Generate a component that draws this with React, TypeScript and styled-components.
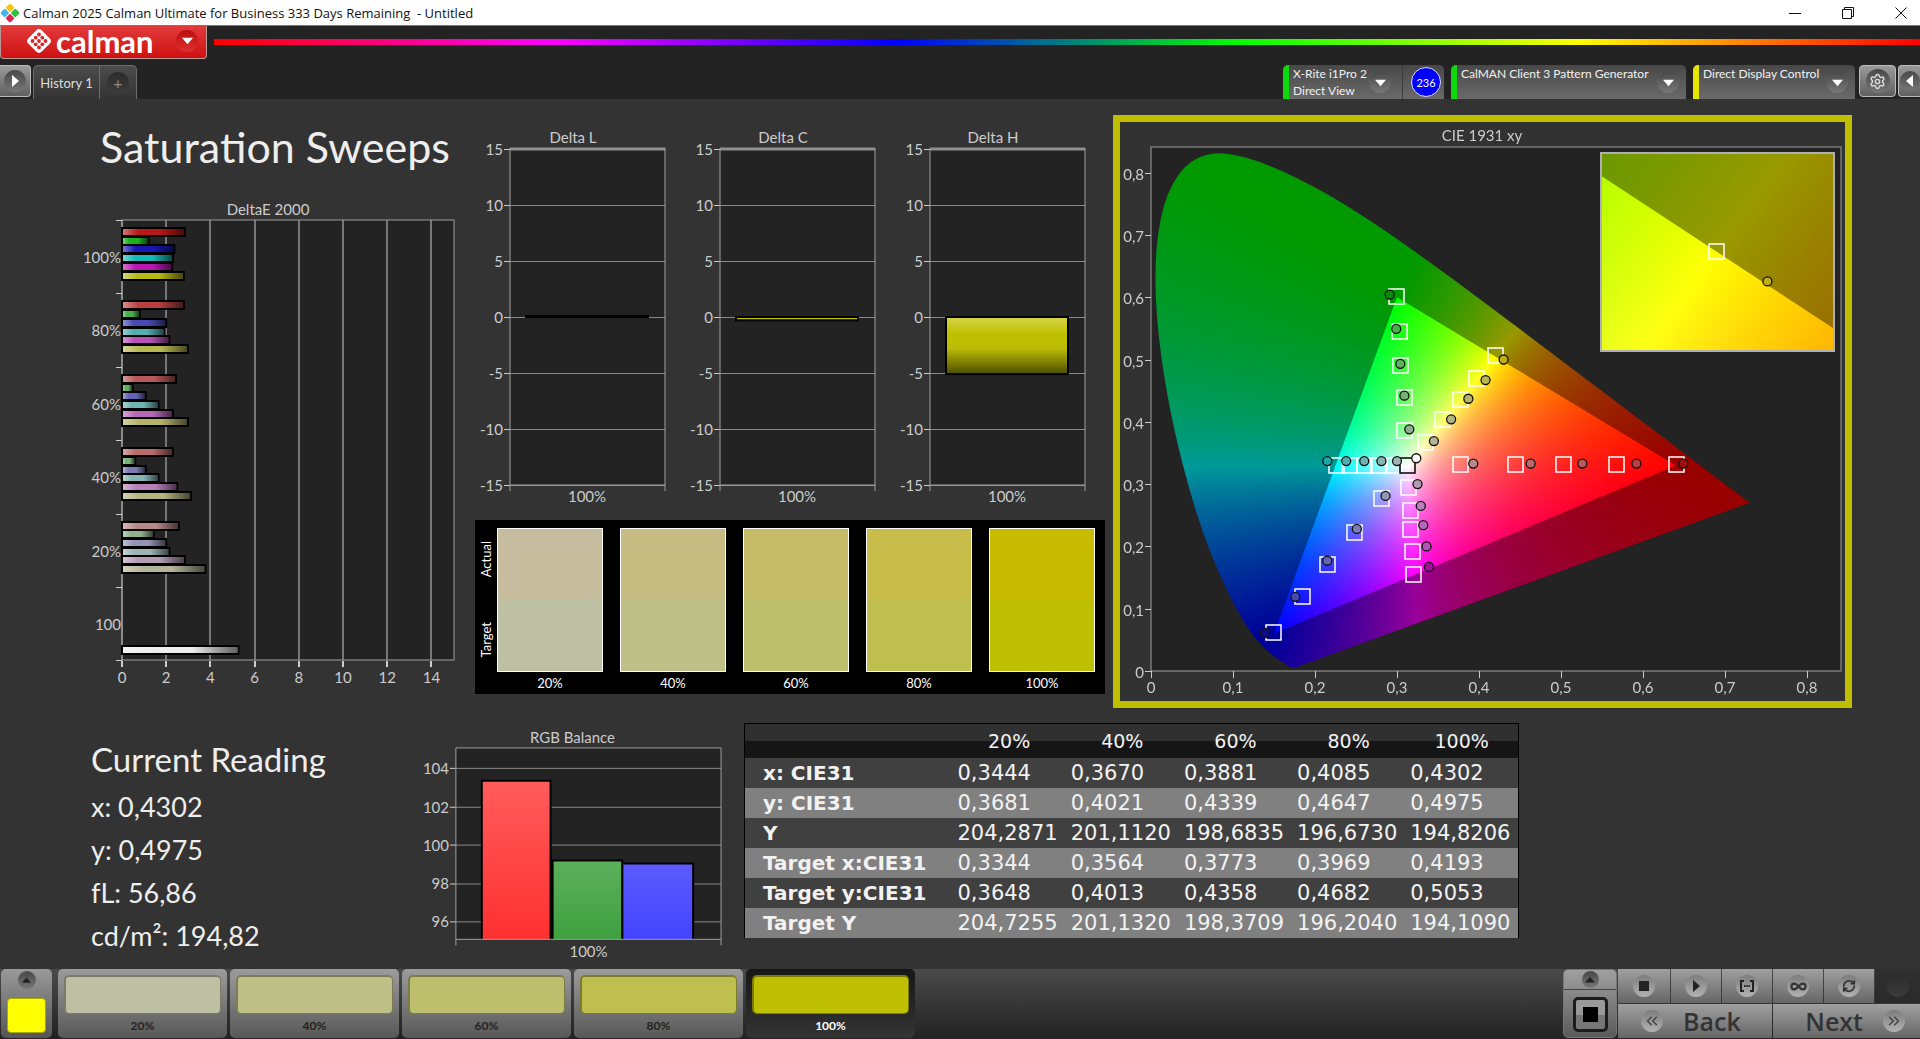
import React, { useLayoutEffect, useRef } from "react";
import styled, { createGlobalStyle } from "styled-components";
import { ChevronsLeft, ChevronsRight, Infinity as InfinityIcon, RefreshCw, Settings } from "lucide-react";

const GlobalStyle = createGlobalStyle`
  * { box-sizing: border-box; }
  body { margin: 0; background: #333; color: #eee; font-family: Lato, "Open Sans", sans-serif; }
  button { font: inherit; color: inherit; border: 0; padding: 0; margin: 0; background: none; cursor: pointer; }
  h1, h2, p { margin: 0; font-weight: 400; }
  svg { display: block; }
`;

const Page = styled.div`
  min-height: 100vh;
  display: flex;
  flex-direction: column;
  overflow: hidden;
`;

/* ---------- window title ---------- */

const TitleBar = styled.header`
  display: flex;
  align-items: center;
  height: 25px;
  padding: 0 13px 0 0;
  gap: 3px;
  background: #fff;
  color: #111;
  font: 13px/20px "Open Sans", sans-serif;
`;

const WindowTitle = styled.span`
  flex: 1;
  white-space: pre;
`;

const WindowControls = styled.div`
  display: flex;
  gap: 41px;
`;

const WindowButton = styled.button`
  width: 12px;
  height: 12px;
`;

/* ---------- top toolbars ---------- */

const BrandBar = styled.div`
  display: flex;
  align-items: flex-start;
  height: 40px;
  background: #232323;
  border-top: 1px solid #777;
`;

const BrandTab = styled.div`
  display: flex;
  align-items: center;
  width: 207px;
  height: 33px;
  padding: 0 8px 3px 24px;
  border: 1px solid #b99;
  border-top: 0;
  border-radius: 0 0 4px 4px;
  background: linear-gradient(#e23b3b, #cf1111);
`;

const BrandName = styled.span`
  flex: 1;
  margin-left: 3px;
  font-size: 31px;
  line-height: 30px;
  font-weight: 700;
  color: #fff;
`;

const BrandMenu = styled.button`
  display: grid;
  place-items: center;
  width: 22px;
  height: 22px;
  border-radius: 50%;
  background: linear-gradient(#b90f0f, #e03030);
`;

const Rainbow = styled.div`
  flex: 1;
  height: 6px;
  margin: 13px 0 0 7px;
  background: linear-gradient(90deg, #f00, #f0f, #00f, #0f0, #ff0, #f00);
`;

const ToolRow = styled.div`
  display: flex;
  align-items: flex-start;
  height: 34px;
  background: #232323;
`;

const GreyKey = styled.button<{ $open?: "left" | "right" }>`
  display: grid;
  place-items: center;
  width: ${(p) => (p.$open === "left" ? 31 : p.$open === "right" ? 22 : 37)}px;
  height: 32px;
  border: 1px solid #bbb;
  border-radius: 4px;
  ${(p) => p.$open === "left" && "border-left: 0; border-radius: 0 4px 4px 0;"}
  ${(p) => p.$open === "right" && "border-right: 0; border-radius: 4px 0 0 4px;"}
  background: linear-gradient(#9a9a9a, #606060);
`;

const Disc = styled.span<{ $size: number; $flat?: boolean; $light?: boolean }>`
  display: grid;
  place-items: center;
  flex: none;
  width: ${(p) => p.$size}px;
  height: ${(p) => p.$size}px;
  border-radius: 50%;
  background: ${(p) =>
    p.$flat ? "linear-gradient(#2c2c2c, #3c3c3c)" : p.$light ? "linear-gradient(#7c7c7c, #b2b2b2)" : "linear-gradient(#484848, #777)"};
`;

const HistoryTabs = styled.nav`
  display: flex;
  height: 34px;
  margin-left: 2px;
  border: 1px solid #6c6c6c;
  border-bottom: 0;
  border-radius: 5px 5px 0 0;
  background: linear-gradient(#4c4c4c, #333);
  color: #ddd;
`;

const HistoryTab = styled.button`
  width: 66px;
  border-right: 1px solid #6c6c6c;
  font-size: 13px;
  line-height: 18px;
`;

const AddTab = styled.button`
  display: grid;
  place-items: center;
  width: 36px;
  color: #888;
  font-size: 16px;
  line-height: 16px;
`;

const Devices = styled.div`
  display: flex;
  gap: 7px;
  margin-left: auto;
  margin-right: 4px;
`;

const Device = styled.div<{ $accent: string; $width: number }>`
  display: flex;
  width: ${(p) => p.$width}px;
  height: 34px;
  padding: 0 7px 0 4px;
  border-left: 6px solid ${(p) => p.$accent};
  border-radius: 5px 5px 0 0;
  background: linear-gradient(#484848, #6a6a6a);
`;

const DeviceName = styled.span`
  flex: 1;
  white-space: nowrap;
  font-size: 12px;
  line-height: 17px;
  color: #f2f2f2;
`;

const DeviceMenu = styled.button`
  display: flex;
  align-items: center;
`;

const MeterStatus = styled.div`
  display: flex;
  align-items: center;
  margin-left: 11px;
  padding-left: 8px;
  border-left: 1px solid #3a3a3a;
`;

const Counter = styled.span`
  display: grid;
  place-items: center;
  flex: none;
  width: 30px;
  height: 30px;
  margin-right: -4px;
  border: 1px solid #ddf;
  border-radius: 50%;
  background: #00f;
  color: #fff;
  font-size: 11px;
`;

const KeyGroup = styled.div`
  display: flex;
  gap: 2px;
`;

/* ---------- workspace ---------- */

const Workspace = styled.main`
  flex: 1;
  background: #333;
`;

const UpperRow = styled.section`
  display: grid;
  grid-template-columns: 475fr 638fr 739fr;
  align-items: start;
  padding-right: 68px;
`;

const SweepColumn = styled.div`
  padding-top: 23px;
`;

const Heading = styled.h1`
  padding-left: 100px;
  margin-bottom: 23px;
  font-size: 43px;
  line-height: 50px;
  white-space: nowrap;
`;

const DeltaColumn = styled.div`
  padding: 26px 8px 0 0;
`;

const DeltaRow = styled.div`
  display: grid;
  grid-template-columns: repeat(3, 1fr);
`;

const Chart = styled.svg`
  width: 100%;
  height: auto;
  font-family: Lato, "Open Sans", sans-serif;
  font-size: 15px;
  fill: #ccc;
`;

const SwatchPanel = styled.div`
  display: grid;
  grid-template-columns: 22px 1fr;
  margin-top: 10px;
  padding: 8px 10px 0 0;
  height: 174px;
  background: #000;
  color: #fff;
`;

const SideLabels = styled.div`
  display: flex;
  flex-direction: column;
  justify-content: space-between;
  align-items: center;
  height: 142px;
  padding: 13px 0;
  font-size: 13px;
  line-height: 16px;
  span { writing-mode: vertical-rl; transform: rotate(180deg); }
`;

const SwatchGrid = styled.div`
  display: grid;
  grid-template-columns: repeat(5, 1fr);
  column-gap: 17px;
`;

const Swatch = styled.figure<{ $actual: string; $target: string }>`
  margin: 0;
  text-align: center;
  font-size: 13px;
  line-height: 22px;
  &::before {
    content: "";
    display: block;
    height: 142px;
    border: 1px solid #fff;
    background: linear-gradient(${(p) => p.$actual} 50%, ${(p) => p.$target} 50%);
  }
`;

const CiePanel = styled.div`
  display: grid;
  margin-top: 16px;
  border: 7px solid #bfbf00;
  > * { grid-area: 1 / 1; }
`;

const CieCanvas = styled.canvas`
  width: 100%;
  height: 100%;
  background: #323232;
`;

const LowerRow = styled.section`
  display: grid;
  grid-template-columns: 415fr 329fr 775fr 401fr;
  align-items: start;
  padding-top: 15px;
`;

const Reading = styled.div`
  padding: 14px 0 0 91px;
  font-size: 27px;
  line-height: 43px;
  white-space: nowrap;
`;

const ReadingTitle = styled.h2`
  margin-bottom: 4px;
  font-size: 33px;
  line-height: 44px;
`;

const DataTable = styled.table`
  width: 100%;
  border-collapse: collapse;
  table-layout: fixed;
  border: 1px solid #000;
  border-bottom: 0;
  font: 21px/30px "DejaVu Sans", sans-serif;
  color: #f2f2f2;
  th, td { padding: 0 0 0 5px; text-align: left; font-weight: 400; white-space: nowrap; }
  thead tr { height: 34px; background: linear-gradient(#303030 50%, #151515 50%); font-size: 19px; }
  thead th { padding: 0; text-align: center; }
  thead th:first-child { width: 208px; }
  tbody tr:nth-child(odd) { background: #404040; }
  tbody tr:nth-child(even) { background: #808080; }
  tbody th { padding-left: 18px; font-size: 20px; font-weight: 700; }
`;

/* ---------- bottom bar ---------- */

const BottomBar = styled.footer`
  display: flex;
  height: 70px;
  padding-left: 1px;
  background: linear-gradient(#4a4a4a, #222);
`;

const CurrentPatch = styled.button`
  display: flex;
  flex-direction: column;
  align-items: center;
  justify-content: space-between;
  width: 51px;
  height: 69px;
  margin-right: 6px;
  padding: 2px 0 5px;
  border-radius: 5px;
  background: linear-gradient(#999, #555);
`;

const PatchColor = styled.span`
  width: 39px;
  height: 35px;
  border: 1px solid #a8a800;
  border-radius: 4px;
  background: #ff0;
`;

const PatchList = styled.div`
  display: flex;
  gap: 3px;
  flex: 1;
`;

const Patch = styled.button<{ $active?: boolean }>`
  display: flex;
  flex-direction: column;
  width: 169px;
  height: 69px;
  padding: 6px 6px 0;
  border-radius: 5px;
  background: ${(p) => (p.$active ? "linear-gradient(#171717, #343434)" : "linear-gradient(#9c9c9c, #585858)")};
  color: ${(p) => (p.$active ? "#fff" : "#222")};
  font-size: 12px;
  line-height: 24px;
  font-weight: 700;
  text-align: center;
`;

const PatchFill = styled.span<{ $color: string }>`
  height: 41px;
  border: 1px solid rgba(0, 0, 0, 0.35);
  border-width: 2px 1px 1px 2px;
  border-radius: 5px;
  background: ${(p) => p.$color};
`;

const StopBlock = styled.div`
  display: flex;
  flex-direction: column;
  width: 54px;
  height: 69px;
  margin-right: 1px;
  border: 1px solid #777;
  border-radius: 5px;
  background: linear-gradient(#a0a0a0, #5a5a5a);
`;

const StopMenu = styled.button`
  display: grid;
  place-items: center;
  height: 20px;
  border-bottom: 1px solid #444;
`;

const StopButton = styled.button`
  display: grid;
  place-items: center;
  width: 35px;
  height: 35px;
  margin: 7px auto 0;
  border: 3px solid #1c1c1c;
  border-radius: 5px;
  background: linear-gradient(#999 50%, #777 50%);
`;

const Transport = styled.div`
  display: grid;
  grid-template-rows: 34px 34px;
  row-gap: 1px;
  width: 302px;
`;

const TransportRow = styled.div<{ $columns: string }>`
  display: grid;
  grid-template-columns: ${(p) => p.$columns};
  column-gap: 1px;
`;

const TransportKey = styled.button<{ $off?: boolean }>`
  display: flex;
  align-items: center;
  justify-content: center;
  background: ${(p) => (p.$off ? "linear-gradient(#303030, #2a2a2a)" : "linear-gradient(#a0a0a0, #666)")};
  color: #333;
`;

const StepKey = styled(TransportKey)<{ $side: "start" | "end" }>`
  justify-content: flex-${(p) => p.$side};
  gap: 20px;
  padding: 0 15px 0 23px;
  font: 600 25px/30px "Open Sans", sans-serif;
`;

/* ---------- small drawings ---------- */

const Triangle = ({ dir, color = "#fff", size = 11 }: { dir: "up" | "down" | "left" | "right"; color?: string; size?: number }) => {
  const shape = {
    up: "0,9 12,9 6,2",
    down: "0,3 12,3 6,10",
    right: "3,0 10,6 3,12",
    left: "9,0 2,6 9,12",
  }[dir];
  return (
    <svg width={size} height={size} viewBox="0 0 12 12" aria-hidden="true">
      <polygon points={shape} fill={color} />
    </svg>
  );
};

const AppIcon = () => (
  <svg width="20" height="20" viewBox="0 0 20 20" aria-hidden="true">
    <g transform="rotate(45 10 10)">
      <rect x="3" y="3" width="6.6" height="6.6" rx="1.5" fill="#f6c417" />
      <rect x="10.4" y="3" width="6.6" height="6.6" rx="1.5" fill="#27c33b" />
      <rect x="3" y="10.4" width="6.6" height="6.6" rx="1.5" fill="#3fb8f0" />
      <rect x="10.4" y="10.4" width="6.6" height="6.6" rx="1.5" fill="#e0244e" />
    </g>
  </svg>
);

const BrandMark = () => (
  <svg width="28" height="28" viewBox="0 0 28 28" aria-hidden="true">
    <rect x="4.5" y="4.5" width="19" height="19" rx="4" fill="#fff" transform="rotate(45 14 14)" />
    <g fill="#d92525">
      {[[14, 7.5], [7.5, 14], [20.5, 14], [14, 20.5], [14, 14], [10.7, 10.7], [17.3, 10.7], [10.7, 17.3], [17.3, 17.3]].map(([x, y], i) => (
        <circle key={i} cx={x} cy={y} r={1.9} />
      ))}
    </g>
  </svg>
);

/* ---------- charts ---------- */

const GRID = "#8a8a8a";
const FRAME = "#a0a0a0";
const PLOT = "#232323";

const BAR_COLORS = [
  ["#b81818", "#1fb01f", "#1616b4", "#18b8b8", "#b818b8", "#b8b818"],
  ["#b84040", "#48b048", "#4848b4", "#50b0b0", "#b850b8", "#b8b850"],
  ["#b85858", "#60b060", "#6464b4", "#70b4b4", "#b868b8", "#b4b468"],
  ["#b86c6c", "#78b078", "#7c7cb4", "#88b4b4", "#b880b8", "#b4b480"],
  ["#b88888", "#90b090", "#9494b4", "#9cb4b4", "#b49cb4", "#b4b498"],
];

const DELTA_E = [
  [2.85, 1.2, 2.37, 2.3, 2.27, 2.8],
  [2.8, 0.8, 2.0, 1.92, 2.14, 2.98],
  [2.44, 0.48, 1.07, 1.65, 2.3, 2.98],
  [2.3, 0.6, 1.07, 1.65, 2.5, 3.12],
  [2.57, 1.43, 2.0, 2.14, 2.85, 3.77],
];

const HBar = ({ y, value, color }: { y: number; value: number; color: string }) => (
  <g>
    <rect x="122" y={y - 4} width={value * 22.1} height="8" fill={color} stroke="#000" strokeWidth="2" />
    <rect x="123" y={y - 3} width={value * 22.1 - 2} height="6" fill="url(#barShade)" />
  </g>
);

const DeltaEChart = () => (
  <Chart viewBox="0 0 475 495" role="img" aria-label="DeltaE 2000">
    <defs>
      <linearGradient id="barShade">
        <stop offset="0" stopColor="#fff" stopOpacity="0.4" />
        <stop offset="0.25" stopColor="#fff" stopOpacity="0" />
        <stop offset="0.6" stopColor="#000" stopOpacity="0" />
        <stop offset="1" stopColor="#000" stopOpacity="0.6" />
      </linearGradient>
    </defs>
    <text x="268" y="20" textAnchor="middle">DeltaE 2000</text>
    <rect x="122" y="25" width="332" height="440" fill={PLOT} />
    {[0, 2, 4, 6, 8, 10, 12, 14].map((v) => (
      <g key={v}>
        <rect x={Math.round(121 + v * 22.1)} y="25" width="2" height="440" fill="#777" />
        <rect x={Math.round(121 + v * 22.1)} y="466" width="2" height="6" fill="#ccc" />
        <text x={122 + v * 22.1} y="488" textAnchor="middle">{v}</text>
      </g>
    ))}
    <rect x="122" y="25" width="332" height="440" fill="none" stroke={FRAME} />
    {["100%", "80%", "60%", "40%", "20%", "100"].map((label, i) => (
      <g key={label}>
        <rect x="116" y={Math.round(25 + i * 73.4)} width="6" height="1" fill="#ccc" />
        <text x="121" y={68 + i * 73.4} textAnchor="end">{label}</text>
      </g>
    ))}
    <rect x="116" y="465" width="6" height="1" fill="#ccc" />
    {DELTA_E.map((group, g) =>
      group.map((value, i) => <HBar key={`${g}-${i}`} y={Math.round(37 + g * 73.4 + i * 8.7)} value={value} color={BAR_COLORS[g][i]} />)
    )}
    <HBar y={455} value={5.27} color="#eee" />
  </Chart>
);

const DeltaChart = ({ name, value }: { name: string; value: number }) => {
  const zero = 192;
  const depth = value * 11.2;
  const top = Math.min(zero, zero - depth);
  return (
    <Chart viewBox="0 0 210 385" role="img" aria-label={name}>
      <defs>
        <linearGradient id="yellowBar" x1="0" y1="0" x2="0" y2="1">
          <stop offset="0" stopColor="#d6d64a" />
          <stop offset="0.3" stopColor="#c0c000" />
          <stop offset="0.55" stopColor="#bcbc08" />
          <stop offset="1" stopColor="#4c4c00" />
        </linearGradient>
      </defs>
      <text x="98" y="18" textAnchor="middle">{name}</text>
      <rect x="35" y="24" width="155" height="336" fill={PLOT} />
      {[15, 10, 5, 0, -5, -10, -15].map((v) => {
        const y = zero - v * 11.2;
        return (
          <g key={v}>
            <rect x="35" y={Math.round(y)} width="155" height="1" fill={GRID} />
            <rect x="29" y={Math.round(y)} width="6" height="1" fill="#ccc" />
            <text x="28" y={y + 6} textAnchor="end">{v}</text>
          </g>
        );
      })}
      <path d="M35 24H190" stroke="#8f8f8f" strokeWidth="3" />
      <path d="M35 23V366M190 23V366M35 360H190" fill="none" stroke={FRAME} strokeWidth="1" />
      <rect x="51" y={top} width="122" height={Math.max(1, Math.abs(depth))} fill="url(#yellowBar)" stroke="#000" strokeWidth="2" />
      <text x="112" y="377" textAnchor="middle">100%</text>
    </Chart>
  );
};

const RgbChart = () => (
  <Chart viewBox="0 0 330 238" role="img" aria-label="RGB Balance">
    <defs>
      {[["red", "#ff5c5c", "#ff3030"], ["green", "#5cb05c", "#40a040"], ["blue", "#5c5cff", "#4444ff"]].map(([id, a, b]) => (
        <linearGradient key={id} id={`balance-${id}`} x1="0" y1="0" x2="0" y2="1">
          <stop offset="0" stopColor={a} />
          <stop offset="1" stopColor={b} />
        </linearGradient>
      ))}
    </defs>
    <text x="158" y="20" textAnchor="middle">RGB Balance</text>
    <rect x="41" y="25" width="266" height="192" fill={PLOT} />
    {[104, 102, 100, 98, 96].map((v, i) => {
      const y = Math.round(45 + i * 38.5);
      return (
        <g key={v}>
          <rect x="41" y={y} width="266" height="1" fill={GRID} />
          <rect x="35" y={y} width="6" height="1" fill="#ccc" />
          <text x="34" y={y + 6} textAnchor="end">{v}</text>
        </g>
      );
    })}
    <path d="M67 217V58H136V217" fill="url(#balance-red)" stroke="#000" strokeWidth="2" />
    <path d="M138 217V138H208V217" fill="url(#balance-green)" stroke="#000" strokeWidth="2" />
    <path d="M208 217V141H279V217" fill="url(#balance-blue)" stroke="#000" strokeWidth="2" />
    <path d="M41 223V25H307V223M41 217H307" fill="none" stroke={FRAME} />
    <text x="174" y="235" textAnchor="middle">100%</text>
  </Chart>
);

/* ---------- CIE diagram ---------- */

type Point = [number, number];

const CIE_W = 725;
const CIE_H = 579;
const px = (x: number) => 31 + x * 820;
const py = (y: number) => 549 - y * 623;

const LOCUS: Point[] = [
  [0.1741, 0.005], [0.1714, 0.0051], [0.1689, 0.0069], [0.1644, 0.0109], [0.1566, 0.0177], [0.151, 0.0227], [0.144, 0.0297],
  [0.1355, 0.0399], [0.1241, 0.0578], [0.1096, 0.0868], [0.0913, 0.1327], [0.0687, 0.2007], [0.0454, 0.295], [0.0235, 0.4127],
  [0.0082, 0.5384], [0.0039, 0.6548], [0.0139, 0.7502], [0.0389, 0.812], [0.0743, 0.8338], [0.1142, 0.8262], [0.1547, 0.8059],
  [0.1929, 0.7816], [0.2296, 0.7543], [0.2658, 0.7243], [0.3016, 0.6923], [0.3731, 0.6245], [0.4441, 0.5547], [0.5125, 0.4866],
  [0.5752, 0.4242], [0.627, 0.3725], [0.6658, 0.334], [0.6915, 0.3083], [0.73, 0.27],
];

const GAMUT: Point[] = [[0.64, 0.33], [0.3, 0.6], [0.15, 0.06]];

const chromaColor = (x: number, y: number) => {
  const yy = Math.max(y, 0.001);
  const X = x / yy;
  const Z = (1 - x - yy) / yy;
  const rgb = [
    3.2406 * X - 1.5372 - 0.4986 * Z,
    -0.9689 * X + 1.8758 + 0.0415 * Z,
    0.0557 * X - 0.204 + 1.057 * Z,
  ].map((c) => Math.max(0, c));
  const peak = Math.max(...rgb);
  return rgb.map((c) => (255 * c) / peak);
};

const colorField = (w: number, h: number, toX: (i: number) => number, toY: (j: number) => number, gain: number) => {
  const field = document.createElement("canvas");
  field.width = w;
  field.height = h;
  const ctx = field.getContext("2d")!;
  const image = ctx.createImageData(w, h);
  for (let j = 0; j < h; j++) {
    for (let i = 0; i < w; i++) {
      const [r, g, b] = chromaColor(toX(i), toY(j));
      const k = (j * w + i) * 4;
      image.data[k] = r * gain;
      image.data[k + 1] = g * gain;
      image.data[k + 2] = b * gain;
      image.data[k + 3] = 255;
    }
  }
  ctx.putImageData(image, 0, 0);
  return field;
};

const INSET = { x: 481, y: 31, w: 233, h: 198 };
const insetX = (x: number) => 596 + (x - 0.4193) * 4716;
const insetY = (y: number) => 129 - (y - 0.5053) * 3900;

const paintCie = (canvas: HTMLCanvasElement) => {
  const ctx = canvas.getContext("2d")!;
  ctx.fillStyle = PLOT;
  ctx.fillRect(31, 25, 690, 524);

  const toX = (i: number) => (i - 31) / 820;
  const toY = (j: number) => (549 - j) / 623;
  const clipTo = (points: Point[], fx: (v: number) => number, fy: (v: number) => number, smooth: boolean) => {
    ctx.beginPath();
    ctx.moveTo(fx(points[0][0]), fy(points[0][1]));
    for (let i = 1; i < points.length; i++) {
      const [x, y] = points[i];
      if (smooth && i < points.length - 1) {
        const [nx, ny] = points[i + 1];
        ctx.quadraticCurveTo(fx(x), fy(y), fx((x + nx) / 2), fy((y + ny) / 2));
      } else ctx.lineTo(fx(x), fy(y));
    }
    ctx.closePath();
    ctx.clip();
  };

  ctx.save();
  clipTo(LOCUS, px, py, true);
  ctx.drawImage(colorField(CIE_W, CIE_H, toX, toY, 0.6), 0, 0);
  ctx.restore();
  ctx.save();
  clipTo(GAMUT, px, py, false);
  ctx.drawImage(colorField(CIE_W, CIE_H, toX, toY, 1), 0, 0);
  ctx.restore();

  const inX = (i: number) => 0.4193 + (i + INSET.x - 596) / 4716;
  const inY = (j: number) => 0.5053 + (129 - j - INSET.y) / 3900;
  ctx.drawImage(colorField(INSET.w, INSET.h, inX, inY, 0.6), INSET.x, INSET.y);
  ctx.save();
  ctx.beginPath();
  ctx.rect(INSET.x, INSET.y, INSET.w, INSET.h);
  ctx.clip();
  clipTo(GAMUT, insetX, insetY, false);
  ctx.drawImage(colorField(INSET.w, INSET.h, inX, inY, 1), INSET.x, INSET.y);
  ctx.restore();
};

const TARGETS: Point[] = [
  [0.299, 0.602], [0.302, 0.545], [0.304, 0.491], [0.308, 0.44], [0.309, 0.387],
  [0.42, 0.508], [0.396, 0.47], [0.377, 0.437], [0.355, 0.404], [0.334, 0.368],
  [0.225, 0.331], [0.242, 0.331], [0.26, 0.331], [0.277, 0.331], [0.296, 0.331],
  [0.377, 0.333], [0.444, 0.333], [0.503, 0.333], [0.567, 0.333], [0.64, 0.333],
  [0.28, 0.277], [0.247, 0.223], [0.215, 0.172], [0.184, 0.121], [0.149, 0.063],
  [0.314, 0.295], [0.316, 0.258], [0.316, 0.228], [0.318, 0.193], [0.32, 0.156],
];

const READINGS: { color: string[]; points: Point[] }[] = [
  { color: ["#0a8a0a", "#48b048", "#60b060", "#78b078", "#90b090"], points: [[0.291, 0.604], [0.299, 0.549], [0.304, 0.493], [0.309, 0.442], [0.315, 0.388]] },
  { color: ["#bfae10", "#b8b850", "#b4b468", "#b4b480", "#b4b498"], points: [[0.43, 0.5], [0.408, 0.467], [0.387, 0.437], [0.366, 0.404], [0.345, 0.369]] },
  { color: ["#18a8a8", "#50b0b0", "#70b4b4", "#88b4b4", "#9cb4b4"], points: [[0.215, 0.337], [0.238, 0.337], [0.26, 0.337], [0.281, 0.337], [0.3, 0.337]] },
  { color: ["#b88888", "#b86c6c", "#b85858", "#b84040", "#a01010"], points: [[0.393, 0.333], [0.463, 0.333], [0.526, 0.333], [0.592, 0.333], [0.649, 0.333]] },
  { color: ["#9494b4", "#7c7cb4", "#6464b4", "#4848b4", "#0c0c90"], points: [[0.286, 0.281], [0.251, 0.228], [0.215, 0.177], [0.176, 0.119], [0.139, 0.061]] },
  { color: ["#b49cb4", "#b880b8", "#b868b8", "#b850b8", "#a010a0"], points: [[0.325, 0.3], [0.329, 0.265], [0.332, 0.234], [0.336, 0.2], [0.339, 0.167]] },
];

const TargetBox = ({ x, y, color = "#fff" }: { x: number; y: number; color?: string }) => (
  <rect x={Math.round(x) - 7} y={Math.round(y) - 7} width="15" height="15" fill="none" stroke={color} strokeWidth="1.5" />
);

const ReadingDot = ({ x, y, color }: { x: number; y: number; color: string }) => (
  <circle cx={x} cy={y} r="4.5" fill={color} stroke="#111" strokeWidth="1.3" />
);

const comma = (v: number) => (v === 0 ? "0" : `0,${v}`);

const CieChart = () => {
  const ref = useRef<HTMLCanvasElement>(null);
  useLayoutEffect(() => {
    if (ref.current) paintCie(ref.current);
  }, []);
  return (
    <CiePanel>
      <CieCanvas ref={ref} width={CIE_W} height={CIE_H} />
      <Chart viewBox={`0 0 ${CIE_W} ${CIE_H}`} role="img" aria-label="CIE 1931 xy">
        <text x="362" y="19" textAnchor="middle">CIE 1931 xy</text>
        <rect x="31" y="25" width="690" height="524" fill="none" stroke={FRAME} />
        {[0, 1, 2, 3, 4, 5, 6, 7, 8].map((v) => (
          <g key={v}>
            <rect x={px(v / 10)} y="549" width="1" height="7" fill="#ccc" />
            <text x={px(v / 10)} y="571" textAnchor="middle">{comma(v)}</text>
            <rect x="25" y={Math.round(py(v / 10))} width="6" height="1" fill="#ccc" />
            <text x="24" y={py(v / 10) + 7} textAnchor="end">{comma(v)}</text>
          </g>
        ))}
        {TARGETS.map(([x, y], i) => <TargetBox key={i} x={px(x)} y={py(y)} />)}
        <TargetBox x={px(0.312)} y={py(0.331)} color="#000" />
        {READINGS.map((series) =>
          series.points.map(([x, y], i) => <ReadingDot key={`${x}${y}`} x={px(x)} y={py(y)} color={series.color[i]} />)
        )}
        <ReadingDot x={px(0.3235)} y={py(0.3415)} color="#fff" />
        <rect x={INSET.x} y={INSET.y} width={INSET.w} height={INSET.h} fill="none" stroke="#b0b0b0" strokeWidth="2" />
        <TargetBox x={insetX(0.4193)} y={insetY(0.5053)} />
        <ReadingDot x={insetX(0.4302)} y={insetY(0.4975)} color="#bfae10" />
      </Chart>
    </CiePanel>
  );
};

/* ---------- data ---------- */

const LEVELS = ["20%", "40%", "60%", "80%", "100%"];
const ACTUAL = ["#c6bd9e", "#c6bc82", "#c6bc68", "#c8bc4a", "#c8bc00"];
const TARGET = ["#bec0a4", "#bfc088", "#bebf6c", "#bebf4e", "#bfbf04"];

const ROWS: [string, string[]][] = [
  ["x: CIE31", ["0,3444", "0,3670", "0,3881", "0,4085", "0,4302"]],
  ["y: CIE31", ["0,3681", "0,4021", "0,4339", "0,4647", "0,4975"]],
  ["Y", ["204,2871", "201,1120", "198,6835", "196,6730", "194,8206"]],
  ["Target x:CIE31", ["0,3344", "0,3564", "0,3773", "0,3969", "0,4193"]],
  ["Target y:CIE31", ["0,3648", "0,4013", "0,4358", "0,4682", "0,5053"]],
  ["Target Y", ["204,7255", "201,1320", "198,3709", "196,2040", "194,1090"]],
];

const App = () => (
  <Page>
    <GlobalStyle />
    <TitleBar>
      <AppIcon />
      <WindowTitle>{"Calman 2025 Calman Ultimate for Business 333 Days Remaining  - Untitled"}</WindowTitle>
      <WindowControls>
        <WindowButton aria-label="Minimize">
          <svg width="12" height="12" viewBox="0 0 12 12"><path d="M0 6.5H12" stroke="#111" /></svg>
        </WindowButton>
        <WindowButton aria-label="Restore">
          <svg width="12" height="12" viewBox="0 0 12 12" fill="none" stroke="#111"><path d="M.5 2.5H9.5V11.5H.5ZM2.5 2.5V.5H11.5V9.5H9.5" /></svg>
        </WindowButton>
        <WindowButton aria-label="Close">
          <svg width="12" height="12" viewBox="0 0 12 12" stroke="#111"><path d="M.5.5L11.5 11.5M11.5.5L.5 11.5" /></svg>
        </WindowButton>
      </WindowControls>
    </TitleBar>

    <BrandBar>
      <BrandTab>
        <BrandMark />
        <BrandName>calman</BrandName>
        <BrandMenu aria-label="Main menu"><Triangle dir="down" /></BrandMenu>
      </BrandTab>
      <Rainbow />
    </BrandBar>

    <ToolRow>
      <GreyKey $open="left" aria-label="Expand left panel"><Disc $size={22}><Triangle dir="right" size={12} /></Disc></GreyKey>
      <HistoryTabs>
        <HistoryTab>History 1</HistoryTab>
        <AddTab aria-label="Add history"><Disc $size={22} $flat>+</Disc></AddTab>
      </HistoryTabs>
      <Devices>
        <Device $accent="#0fd80f" $width={161}>
          <DeviceName>X-Rite i1Pro 2<br />Direct View</DeviceName>
          <DeviceMenu aria-label="Meter menu"><Disc $size={22}><Triangle dir="down" /></Disc></DeviceMenu>
          <MeterStatus><Counter>236</Counter></MeterStatus>
        </Device>
        <Device $accent="#0fd80f" $width={235}>
          <DeviceName>CalMAN Client 3 Pattern Generator</DeviceName>
          <DeviceMenu aria-label="Source menu"><Disc $size={22}><Triangle dir="down" /></Disc></DeviceMenu>
        </Device>
        <Device $accent="#e6e600" $width={162}>
          <DeviceName>Direct Display Control</DeviceName>
          <DeviceMenu aria-label="Display menu"><Disc $size={22}><Triangle dir="down" /></Disc></DeviceMenu>
        </Device>
      </Devices>
      <KeyGroup>
        <GreyKey aria-label="Settings"><Disc $size={24}><Settings size={17} color="#ddd" /></Disc></GreyKey>
        <GreyKey $open="right" aria-label="Expand right panel"><Disc $size={20}><Triangle dir="left" size={12} /></Disc></GreyKey>
      </KeyGroup>
    </ToolRow>

    <Workspace>
      <UpperRow>
        <SweepColumn>
          <Heading>Saturation Sweeps</Heading>
          <DeltaEChart />
        </SweepColumn>
        <DeltaColumn>
          <DeltaRow>
            <DeltaChart name="Delta L" value={0.1} />
            <DeltaChart name="Delta C" value={-0.3} />
            <DeltaChart name="Delta H" value={-5.1} />
          </DeltaRow>
          <SwatchPanel>
            <SideLabels><span>Actual</span><span>Target</span></SideLabels>
            <SwatchGrid>
              {LEVELS.map((level, i) => (
                <Swatch key={level} $actual={ACTUAL[i]} $target={TARGET[i]}>
                  <figcaption>{level}</figcaption>
                </Swatch>
              ))}
            </SwatchGrid>
          </SwatchPanel>
        </DeltaColumn>
        <CieChart />
      </UpperRow>

      <LowerRow>
        <Reading>
          <ReadingTitle>Current Reading</ReadingTitle>
          <p>x: 0,4302</p>
          <p>y: 0,4975</p>
          <p>fL: 56,86</p>
          <p>cd/m²: 194,82</p>
        </Reading>
        <RgbChart />
        <DataTable>
          <thead>
            <tr>
              <th aria-label="Measure" />
              {LEVELS.map((level) => <th key={level} scope="col">{level}</th>)}
            </tr>
          </thead>
          <tbody>
            {ROWS.map(([label, values]) => (
              <tr key={label}>
                <th scope="row">{label}</th>
                {values.map((v) => <td key={v}>{v}</td>)}
              </tr>
            ))}
          </tbody>
        </DataTable>
      </LowerRow>
    </Workspace>

    <BottomBar>
      <CurrentPatch aria-label="Current patch">
        <Disc $size={18}><Triangle dir="up" color="#222" size={9} /></Disc>
        <PatchColor />
      </CurrentPatch>
      <PatchList>
        {LEVELS.map((level, i) => (
          <Patch key={level} $active={i === 4}>
            <PatchFill $color={TARGET[i]} />
            {level}
          </Patch>
        ))}
      </PatchList>
      <StopBlock>
        <StopMenu aria-label="Window menu"><Disc $size={17}><Triangle dir="up" color="#222" size={10} /></Disc></StopMenu>
        <StopButton aria-label="Pattern window">
          <svg width="15" height="15" viewBox="0 0 15 15"><rect width="15" height="15" /></svg>
        </StopButton>
      </StopBlock>
      <Transport>
        <TransportRow $columns="52px 50px 50px 50px 50px 1fr">
          <TransportKey aria-label="Stop">
            <Disc $size={22} $light><svg width="10" height="10" viewBox="0 0 10 10"><rect width="10" height="10" fill="#222" /></svg></Disc>
          </TransportKey>
          <TransportKey aria-label="Play"><Disc $size={22} $light><Triangle dir="right" color="#222" size={12} /></Disc></TransportKey>
          <TransportKey aria-label="Read series">
            <Disc $size={22} $light>
              <svg width="14" height="12" viewBox="0 0 14 12" fill="none" stroke="#222" strokeWidth="2">
                <path d="M4 1H1V11H4M10 1H13V11H10" />
                <path d="M4 6H10" strokeDasharray="1.5 0.75" />
              </svg>
            </Disc>
          </TransportKey>
          <TransportKey aria-label="Read continuously"><Disc $size={22} $light><InfinityIcon size={17} color="#333" strokeWidth={3} /></Disc></TransportKey>
          <TransportKey aria-label="Refresh"><Disc $size={22} $light><RefreshCw size={14} color="#333" strokeWidth={3} /></Disc></TransportKey>
          <TransportKey $off aria-label="Record"><Disc $size={22} $flat /></TransportKey>
        </TransportRow>
        <TransportRow $columns="154px 1fr">
          <StepKey $side="start"><Disc $size={22} $light><ChevronsLeft size={18} color="#444" /></Disc>Back</StepKey>
          <StepKey $side="end">Next<Disc $size={22} $light><ChevronsRight size={18} color="#444" /></Disc></StepKey>
        </TransportRow>
      </Transport>
    </BottomBar>
  </Page>
);

export default App;
